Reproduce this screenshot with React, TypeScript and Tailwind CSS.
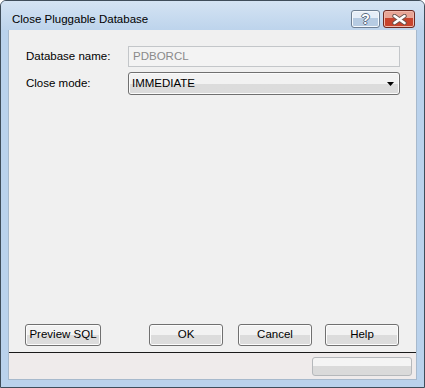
const btn =
  "h-[22px] w-[74px] rounded-[3px] border border-[#707070] bg-gradient-to-b from-[#f2f2f2] from-50% to-[#dcdcdc] to-50% text-[11.5px] text-black shadow-[inset_0_0_0_1px_#fcfcfc] flex items-center justify-center"

export default function App() {
  return (
    <div
      className="w-[425px] h-[388px] flex flex-col rounded-t-[6px] border border-[#3f4d5a] bg-[#bad2ec] overflow-hidden"
      style={{ fontFamily: '"Liberation Sans", Arial, sans-serif' }}
    >
      {/* title bar */}
      <div className="h-[29px] shrink-0 flex items-start bg-gradient-to-b from-[#d4e3f3] to-[#bdd4ec] pl-[11px] pr-[9px]">
        <span className="mt-[11px] text-[11.5px] leading-[14px] text-black">
          Close Pluggable Database
        </span>
        <div className="ml-auto mt-[9px] flex gap-[3px]">
          <div className="h-[18px] w-[29px] rounded-[3px] border border-[#6e7f93] bg-gradient-to-b from-[#e6eef8] from-45% to-[#b6cbe2] to-45% shadow-[inset_0_0_0_1px_#f4f8fc] flex items-center justify-center">
            <span className="text-[14px] font-bold leading-none text-white [text-shadow:1px_0_0_#5b6d82,-1px_0_0_#5b6d82,0_1px_0_#5b6d82,0_-1px_0_#5b6d82]">
              ?
            </span>
          </div>
          <div className="h-[18px] w-[32px] rounded-[3px] border border-[#6d2a22] bg-gradient-to-b from-[#e8a596] from-45% to-[#c8442d] to-45% shadow-[inset_0_0_0_1px_#f0b8ab] flex items-center justify-center">
            <svg width="15" height="11" viewBox="0 0 15 11">
              <path
                d="M2.5 2 L12.5 9 M12.5 2 L2.5 9"
                stroke="#6b5550"
                strokeWidth="4.4"
                strokeLinecap="round"
              />
              <path
                d="M2.5 2 L12.5 9 M12.5 2 L2.5 9"
                stroke="#ffffff"
                strokeWidth="2.6"
                strokeLinecap="round"
              />
            </svg>
          </div>
        </div>
      </div>

      {/* client with side frames */}
      <div className="flex-1 flex px-[7px] pb-[7px]">
        <div className="flex-1 flex flex-col bg-[#f0f0f0] border border-[#a7b9cc] border-t-0">
          <div className="flex-1 flex flex-col gap-[5px] pt-[16px] pl-[17px] pr-[16px]">
            <div className="flex items-center">
              <span className="w-[102px] text-[11.5px] text-black">Database name:</span>
              <div className="flex-1 h-[21px] border border-[#c3c6c9] bg-[#f3f3f3] flex items-center pl-[4px] text-[11.5px] text-[#8a8a8a]">
                PDBORCL
              </div>
            </div>
            <div className="flex items-center">
              <span className="w-[102px] text-[11.5px] text-black">Close mode:</span>
              <div className="flex-1 h-[23px] rounded-[3px] border border-[#707070] bg-gradient-to-b from-[#f2f2f2] from-50% to-[#dcdcdc] to-50% shadow-[inset_0_0_0_1px_#fbfbfb] flex items-center pl-[3px] pr-[5px] text-[11.5px] text-black">
                IMMEDIATE
                <svg className="ml-auto" width="7" height="4" viewBox="0 0 7 4">
                  <path d="M0 0 H7 L3.5 4 Z" fill="#000" />
                </svg>
              </div>
            </div>
          </div>

          <div className="flex items-center pl-[16px] pr-[17px]">
            <button className={btn + " w-[76px]"}>Preview SQL</button>
            <button
              className={
                btn +
                " ml-[48px] border-[#3399cc] shadow-[inset_0_0_0_1px_#5ee0fc]"
              }
            >
              OK
            </button>
            <button className={btn + " ml-[15px]"}>Cancel</button>
            <button className={btn + " ml-auto"}>Help</button>
          </div>

          <div className="mt-[6px] h-px bg-[#1a1a1a]" />
          <div className="h-[26px] bg-[#efebeb] flex items-center justify-end pr-[4px]">
            <div className="h-[19px] w-[100px] rounded-[3px] border border-[#b5b8bb] bg-gradient-to-b from-[#f4f4f4] from-45% to-[#dadada] to-45%" />
          </div>
        </div>
      </div>
    </div>
  )
}
